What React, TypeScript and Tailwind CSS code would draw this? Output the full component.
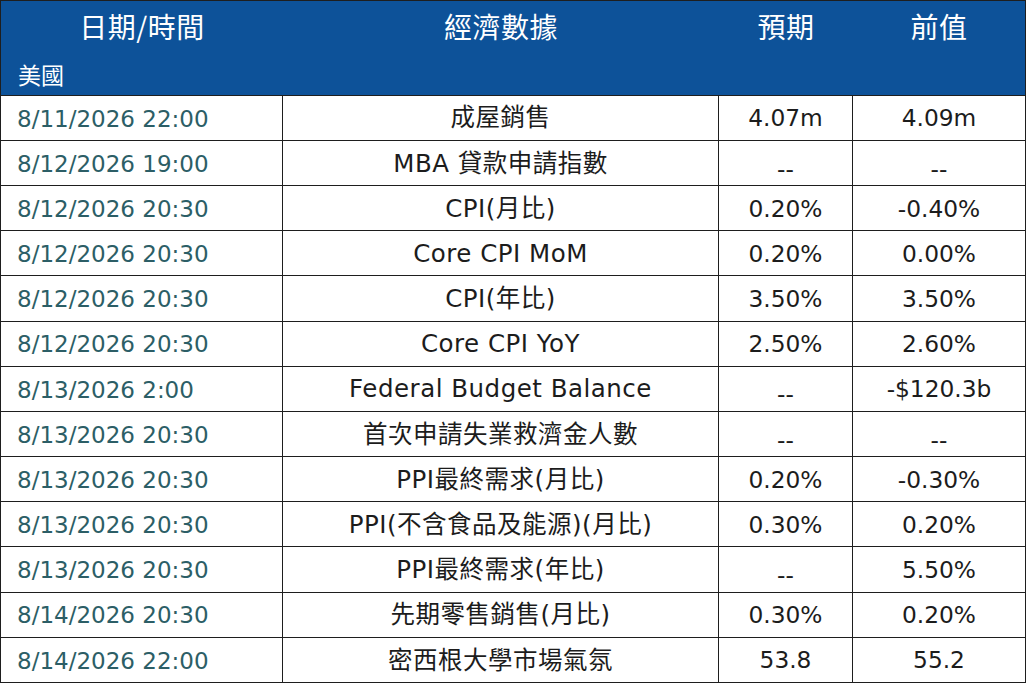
const rows = [
  ["8/11/2026 22:00", "成屋銷售", "4.07m", "4.09m"],
  ["8/12/2026 19:00", "MBA 貸款申請指數", "--", "--"],
  ["8/12/2026 20:30", "CPI(月比)", "0.20%", "-0.40%"],
  ["8/12/2026 20:30", "Core CPI MoM", "0.20%", "0.00%"],
  ["8/12/2026 20:30", "CPI(年比)", "3.50%", "3.50%"],
  ["8/12/2026 20:30", "Core CPI YoY", "2.50%", "2.60%"],
  ["8/13/2026 2:00", "Federal Budget Balance", "--", "-$120.3b"],
  ["8/13/2026 20:30", "首次申請失業救濟金人數", "--", "--"],
  ["8/13/2026 20:30", "PPI最終需求(月比)", "0.20%", "-0.30%"],
  ["8/13/2026 20:30", "PPI(不含食品及能源)(月比)", "0.30%", "0.20%"],
  ["8/13/2026 20:30", "PPI最終需求(年比)", "--", "5.50%"],
  ["8/14/2026 20:30", "先期零售銷售(月比)", "0.30%", "0.20%"],
  ["8/14/2026 22:00", "密西根大學市場氣氛", "53.8", "55.2"],
];

function Val({ v }: { v: string }) {
  if (v === "--") return <span className="inline-block translate-y-[5px]">--</span>;
  return <span>{v}</span>;
}

const cjk = { fontFamily: '"Noto Sans CJK TC", sans-serif' };

export default function App() {
  return (
    <div
      className="w-[1026px] h-[683px] bg-white overflow-hidden"
      style={{ fontFamily: '"DejaVu Sans", "Noto Sans CJK TC", sans-serif' }}
    >
      <div className="border-[1.5px] border-[#1e1e1e] w-[1026px] h-[683px] flex flex-col">
        <div className="bg-[#0d5299] text-white h-[94px] flex flex-col">
          <div
            className="grid grid-cols-[282px_436px_134px_1fr] h-[50px] items-center text-[28px] leading-none text-center tracking-[0.5px]"
            style={cjk}
          >
            <div>日期/時間</div>
            <div>經濟數據</div>
            <div>預期</div>
            <div>前值</div>
          </div>
          <div className="pl-[17px] text-[23px] leading-none pt-[12px]" style={cjk}>
            美國
          </div>
        </div>
        {rows.map((r, i) => (
          <div
            key={i}
            className="grid grid-cols-[282px_436px_134px_1fr] h-[45.3px] border-t-[1.5px] border-[#1e1e1e] text-[23.3px] text-[#1c1c1c]"
          >
            <div className="border-r-[1.5px] border-[#1e1e1e] flex items-center pl-[16px] pt-[2px] text-[23px] text-[#2c5e66]">
              {r[0]}
            </div>
            <div className="border-r-[1.5px] border-[#1e1e1e] flex items-center justify-center pt-[2px] text-[24.5px] tracking-[0.5px]">
              {r[1]}
            </div>
            <div className="border-r-[1.5px] border-[#1e1e1e] flex items-center justify-center pt-[2px]">
              <Val v={r[2]} />
            </div>
            <div className="flex items-center justify-center pt-[2px]">
              <Val v={r[3]} />
            </div>
          </div>
        ))}
      </div>
    </div>
  );
}
